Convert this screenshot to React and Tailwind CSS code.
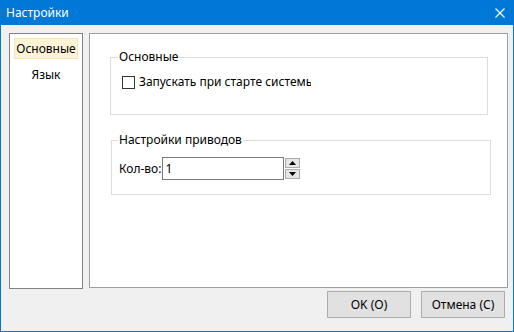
import React from "react";

// Окно настроек в стиле Windows 10
const NavItem = ({ label, active }) => (
    <div
        className={
            "h-[21px] flex items-center justify-center border " +
            (active ? "bg-[#fdf4d8] border-[#f3e4b6]" : "border-transparent")
        }
    >
        {label}
    </div>
);

const GroupBox = ({ title, className, legendClass, children }) => (
    <fieldset className={"border border-[#dcdcdc] " + className}>
        <legend className={"px-[1px] leading-[16px] " + legendClass}>{title}</legend>
        {children}
    </fieldset>
);

const SpinButton = ({ up }) => (
    <div className="h-[10px] w-[15px] border border-[#acacac] bg-[#e6e6e6] flex items-center justify-center">
        <svg width="7" height="4" viewBox="0 0 7 4">
            {up ? <path d="M0 4 L3.5 0 L7 4 Z" fill="#000" /> : <path d="M0 0 L3.5 4 L7 0 Z" fill="#000" />}
        </svg>
    </div>
);

const DialogButton = ({ label }) => (
    <button className="w-[84px] h-[27px] border border-[#adadad] bg-[#e1e1e1] text-[12px] text-black">
        {label}
    </button>
);

export default function App() {
    return (
        <div
            className="w-[514px] h-[332px] bg-[#0078d7] flex flex-col text-[12px] text-black"
            style={{ fontFamily: '"Noto Sans", "Open Sans", sans-serif' }}
        >
            {/* Title bar */}
            <div className="h-[25px] flex items-center justify-between pl-[6px] pr-[9px] text-white text-[12px]">
                <span>Настройки</span>
                <svg width="10" height="10" viewBox="0 0 10 10">
                    <path d="M0.5 0.5 L9.5 9.5 M9.5 0.5 L0.5 9.5" stroke="#fff" strokeWidth="1.1" />
                </svg>
            </div>

            {/* Body */}
            <div className="flex-1 mx-[1px] mb-[1px] bg-[#f0f0f0] flex flex-col pt-[8px] pl-[8px]">
                <div className="flex gap-[6px] h-[256px]">
                    {/* Left navigation */}
                    <div className="w-[74px] h-[256px] border border-[#828282] bg-white flex flex-col gap-[5px] pt-[4px] px-[4px]">
                        <NavItem label="Основные" active />
                        <NavItem label="Язык" />
                    </div>

                    {/* Settings page */}
                    <div className="w-[419px] h-[255px] border border-[#a0a0a0] bg-white flex flex-col pt-[15px]">
                        <GroupBox
                            title="Основные"
                            legendClass="ml-[-4px]"
                            className="ml-[20px] w-[378px] h-[66px] pl-[11px] pt-[8px]"
                        >
                            <div className="flex items-center gap-[4px]">
                                <div className="w-[13px] h-[13px] border border-[#333] bg-white shrink-0" />
                                <div className="w-[172px] overflow-hidden whitespace-nowrap">
                                    Запускать при старте системы
                                </div>
                            </div>
                        </GroupBox>

                        <GroupBox
                            title="Настройки приводов"
                            legendClass="ml-[-1px]"
                            className="ml-[21px] mt-[17px] w-[380px] h-[63px] pl-[7px] pt-[9px]"
                        >
                            <div className="flex items-center">
                                <span>Кол-во:</span>
                                <div className="ml-[1px] w-[122px] h-[23px] border border-[#7a7a7a] bg-white flex items-center pl-[2px]">
                                    1
                                </div>
                                <div className="ml-[1px] flex flex-col gap-[1px]">
                                    <SpinButton up />
                                    <SpinButton />
                                </div>
                            </div>
                        </GroupBox>
                    </div>
                </div>

                {/* Dialog buttons */}
                <div className="flex justify-end gap-[10px] pr-[8px] mt-[2px]">
                    <DialogButton label="OK (O)" />
                    <DialogButton label="Отмена (С)" />
                </div>
            </div>
        </div>
    );
}
